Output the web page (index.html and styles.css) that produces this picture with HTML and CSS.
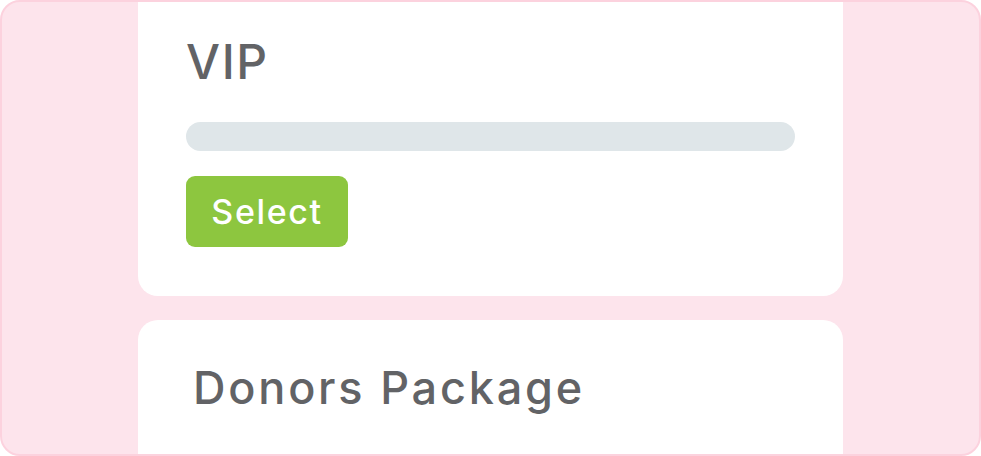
FILE: index.html
```html
<!DOCTYPE html>
<html>
<head>
<meta charset="utf-8">
<link rel="stylesheet" href="styles.css">
</head>
<body>
<div class="frame">
  <div class="column">
    <section class="card card-top">
      <h2 class="title">VIP</h2>
      <div class="bar"></div>
      <button class="select">Select</button>
    </section>
    <section class="card card-bottom">
      <h2 class="title title-donors">Donors Package</h2>
    </section>
  </div>
</div>
</body>
</html>
```
FILE: styles.css
```css
html, body {
  margin: 0;
  padding: 0;
  background: #ffffff;
}
.frame {
  box-sizing: border-box;
  width: 981px;
  height: 456px;
  border: 2px solid #fcd2de;
  border-radius: 20px;
  background: #fde4ec;
  overflow: hidden;
}
.column {
  margin-left: 136px;
  width: 705px;
  display: flex;
  flex-direction: column;
  gap: 24px;
}
.card {
  background: #ffffff;
  box-sizing: border-box;
}
.card-top {
  height: 294px;
  border-radius: 0 0 20px 20px;
  padding: 32px 48px 0 48px;
}
.card-bottom {
  height: 140px;
  border-radius: 20px 20px 0 0;
  padding: 40px 55px 0 55px;
}
.title {
  margin: 0;
  font-family: "Inter", sans-serif;
  font-weight: 500;
  font-size: 48px;
  line-height: 56px;
  letter-spacing: 1.6px;
  color: #626366;
}
.title-donors {
  font-size: 45px;
  letter-spacing: 2.8px;
}
.bar {
  margin-top: 32px;
  width: 609px;
  height: 29px;
  border-radius: 15px;
  background: #dfe6e9;
}
.select {
  margin-top: 25px;
  width: 162px;
  height: 71px;
  border: none;
  border-radius: 9px;
  background: #8dc63f;
  color: #ffffff;
  font-family: "Inter", sans-serif;
  font-weight: 500;
  font-size: 34px;
  letter-spacing: 1.6px;
  padding: 0;
}
```
